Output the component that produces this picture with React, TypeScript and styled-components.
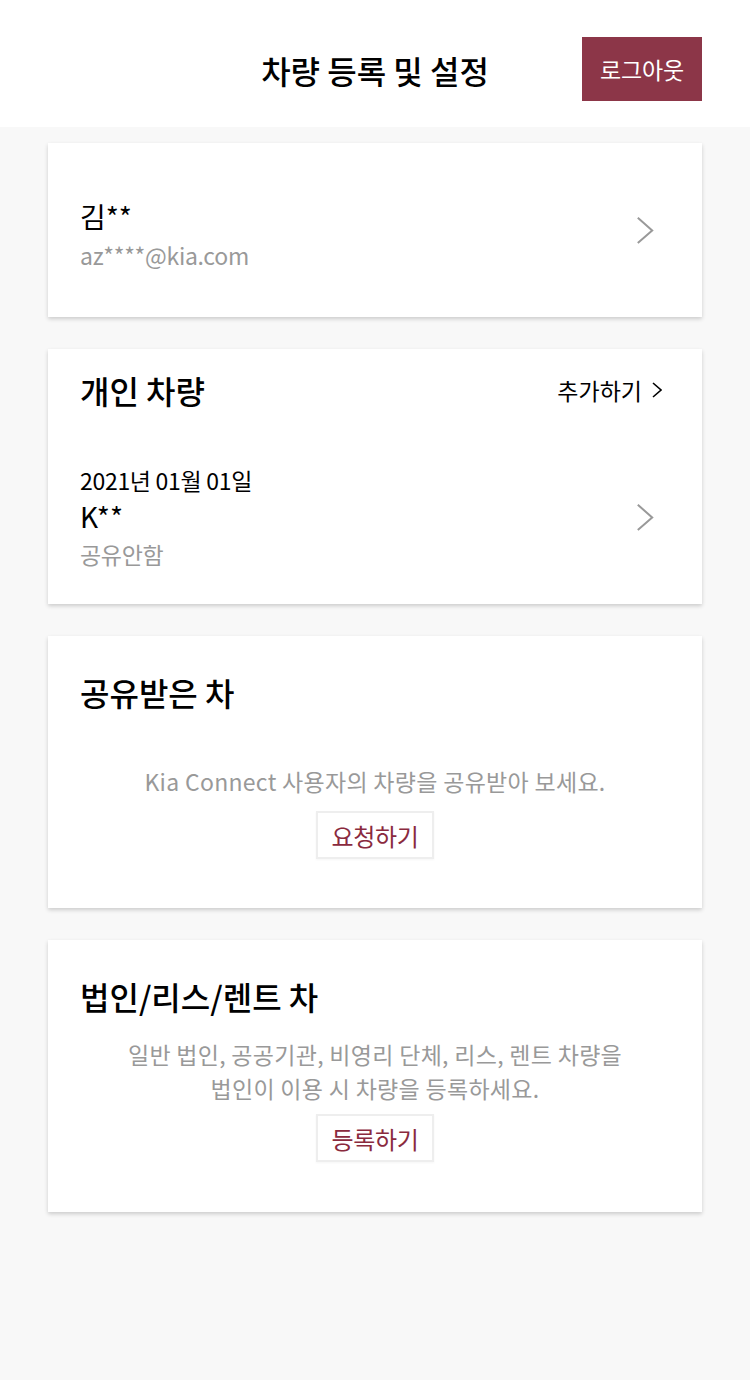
import React from "react";
import styled, { createGlobalStyle } from "styled-components";

const GlobalStyle = createGlobalStyle`
  html, body {
    margin: 0;
    padding: 0;
    background: #f8f8f8;
    font-family: "Noto Sans CJK KR", "Noto Sans", sans-serif;
    color: #000;
  }
`;

const Page = styled.div`
  min-height: 1380px;
  background: #f8f8f8;
`;

const Header = styled.header`
  height: 127px;
  background: #fff;
  display: flex;
  align-items: center;
  justify-content: center;
  position: relative;
`;

const HeaderTitle = styled.h1`
  margin: 0;
  font-size: 32px;
  font-weight: 500;
  line-height: 40px;
  padding-top: 12px;
`;

const LogoutButton = styled.button`
  position: absolute;
  top: 37px;
  right: 48px;
  width: 120px;
  height: 64px;
  border: 0;
  background: #8c3648;
  color: #fff;
  font-family: inherit;
  font-size: 23px;
  letter-spacing: -0.2px;
`;

const CardList = styled.main`
  display: flex;
  flex-direction: column;
  gap: 32px;
  padding: 16px 48px;
`;

const Card = styled.section<{ $height: number; $top: number }>`
  background: #fff;
  height: ${(p) => p.$height}px;
  box-sizing: border-box;
  box-shadow: 0 2px 4px rgba(0, 0, 0, 0.18);
  padding: ${(p) => p.$top}px 32px 0;
  display: flex;
  flex-direction: column;
`;

const Row = styled.div<{ $inset?: number }>`
  display: flex;
  align-items: center;
  justify-content: space-between;
  padding-right: ${(p) => p.$inset ?? 0}px;
`;

const Name = styled.div`
  font-size: 28px;
  line-height: 36px;
`;

const Sub = styled.div<{ $gap?: number }>`
  font-size: 23px;
  line-height: 36px;
  margin-top: ${(p) => p.$gap ?? 0}px;
  color: #999;
  letter-spacing: -0.3px;
`;

const CardTitle = styled.h2`
  margin: 0;
  font-size: 32px;
  font-weight: 500;
  line-height: 40px;
`;

const AddLink = styled.a`
  font-size: 23px;
  color: #000;
  display: flex;
  align-items: center;
  gap: 10px;
  padding-right: 8px;
`;

const VehicleRow = styled(Row)`
  margin-top: 52px;
`;

const DateText = styled.div`
  font-size: 23px;
  line-height: 36px;
  letter-spacing: -0.3px;
`;

const ChevronBox = styled.span<{ $lift?: number }>`
  display: flex;
  margin-bottom: ${(p) => p.$lift ?? 0}px;
`;

const Message = styled.p<{ $gap: number }>`
  margin: ${(p) => p.$gap}px 0 0;
  text-align: center;
  font-size: 23px;
  line-height: 34px;
  color: #999;
  letter-spacing: 0.3px;
`;

const ActionButton = styled.button<{ $gap: number }>`
  align-self: center;
  margin-top: ${(p) => p.$gap}px;
  width: 118px;
  height: 48px;
  background: #fff;
  border: 2px solid #eee;
  box-shadow: 0 1px 2px rgba(0, 0, 0, 0.04);
  color: #8a2a3e;
  font-family: inherit;
  font-size: 24px;
  letter-spacing: -0.3px;
`;

const Chevron = ({ size = 18, color = "#999", w = 2 }: { size?: number; color?: string; w?: number }) => (
  <svg width={size} height={size * 1.6} viewBox="0 0 10 16" fill="none">
    <path d="M1 1 L9 8 L1 15" stroke={color} strokeWidth={w / (size / 10)} />
  </svg>
);

export default function App() {
  return (
    <Page>
      <GlobalStyle />
      <Header>
        <HeaderTitle>차량 등록 및 설정</HeaderTitle>
        <LogoutButton>로그아웃</LogoutButton>
      </Header>
      <CardList>
        <Card $height={174} $top={55}>
          <Row $inset={16}>
            <div>
              <Name>김**</Name>
              <Sub $gap={3}>az****@kia.com</Sub>
            </div>
            <ChevronBox $lift={10}>
              <Chevron />
            </ChevronBox>
          </Row>
        </Card>

        <Card $height={255} $top={21}>
          <Row>
            <CardTitle>개인 차량</CardTitle>
            <AddLink>
              추가하기
              <Chevron size={10} color="#000" w={1.6} />
            </AddLink>
          </Row>
          <VehicleRow $inset={16}>
            <div>
              <DateText>2021년 01월 01일</DateText>
              <Name>K**</Name>
              <Sub $gap={2}>공유안함</Sub>
            </div>
            <ChevronBox>
              <Chevron />
            </ChevronBox>
          </VehicleRow>
        </Card>

        <Card $height={272} $top={36}>
          <CardTitle>공유받은 차</CardTitle>
          <Message $gap={52}>Kia Connect 사용자의 차량을 공유받아 보세요.</Message>
          <ActionButton $gap={13}>요청하기</ActionButton>
        </Card>

        <Card $height={272} $top={36}>
          <CardTitle>법인/리스/렌트 차</CardTitle>
          <Message $gap={21}>
            일반 법인, 공공기관, 비영리 단체, 리스, 렌트 차량을
            <br />
            법인이 이용 시 차량을 등록하세요.
          </Message>
          <ActionButton $gap={9}>등록하기</ActionButton>
        </Card>
      </CardList>
    </Page>
  );
}
